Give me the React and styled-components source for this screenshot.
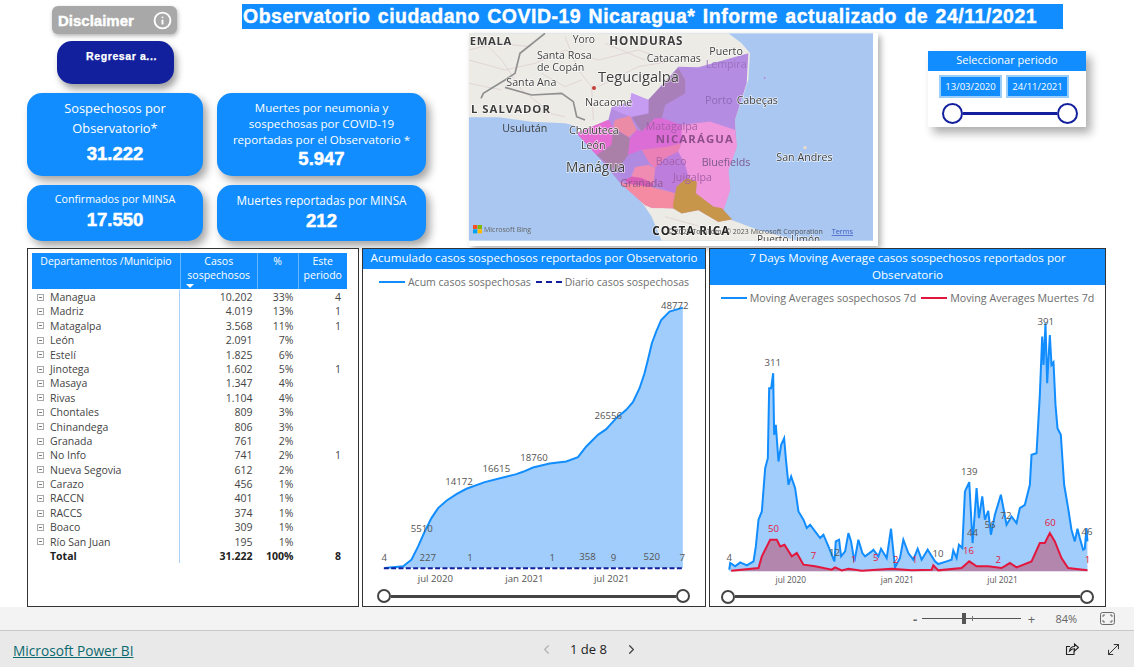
import styled, { createGlobalStyle } from "styled-components";
import { Info, ChevronLeft, ChevronRight, MoveDiagonal } from "lucide-react";

const BLUE = "#118dff";
const NAVY = "#13209e";
const UI_FONT = '"Open Sans", "Noto Sans", sans-serif';
const HEAVY_FONT = '"Liberation Sans", Arial, sans-serif';

const GlobalStyle = createGlobalStyle`
  html, body {
    margin: 0;
    padding: 0;
    background: #fff;
    font-family: ${UI_FONT};
  }
`;

const Page = styled.div`
  width: 1134px;
  height: 667px;
  display: flex;
  flex-direction: column;
  overflow: hidden;
  background: #fff;
`;

const Canvas = styled.main`
  height: 607px;
  flex: none;
`;

const TopArea = styled.section`
  height: 248px;
  padding-left: 27px;
  display: grid;
  grid-template-columns: 190px 252px 459px 206px;
  grid-template-rows: 33px 60px 155px;
`;

const Buttons = styled.div`
  grid-column: 1;
  grid-row: 1 / 3;
  display: flex;
  flex-direction: column;
  align-items: flex-start;
  padding-top: 6px;
  gap: 7px;
`;

const Disclaimer = styled.div`
  width: 125px;
  height: 28px;
  margin-left: 25px;
  box-sizing: border-box;
  padding: 0 5px 0 6px;
  display: flex;
  align-items: center;
  justify-content: space-between;
  border-radius: 6px;
  background: #a8a8a8;
  box-shadow: 1px 2px 4px rgba(0, 0, 0, 0.3);
  color: #fff;
  font: bold 15px ${HEAVY_FONT};
  -webkit-text-stroke: 0.4px #fff;
`;

const BackButton = styled.div`
  width: 117px;
  height: 43px;
  margin-left: 30px;
  box-sizing: border-box;
  padding-top: 9px;
  padding-left: 12px;
  border-radius: 15px;
  background: ${NAVY};
  box-shadow: 3px 5px 7px rgba(0, 0, 0, 0.38);
  color: #fff;
  text-align: center;
  font: bold 10.5px ${HEAVY_FONT};
  letter-spacing: 0.6px;
  -webkit-text-stroke: 0.25px #fff;
`;

const Title = styled.h1`
  grid-column: 2 / 5;
  grid-row: 1;
  width: 821px;
  height: 25px;
  margin: 4px 0 0 25px;
  padding-left: 1px;
  box-sizing: border-box;
  background: ${BLUE};
  color: #fff;
  font: bold 19.5px/25px ${HEAVY_FONT};
  letter-spacing: 0.5px;
  word-spacing: 1.5px;
  white-space: nowrap;
  -webkit-text-stroke: 0.4px #fff;
`;

const KpiGrid = styled.div`
  grid-column: 1 / 3;
  grid-row: 3;
  width: 399px;
  display: grid;
  grid-template-columns: 176px 209px;
  grid-template-rows: 83px 56px;
  column-gap: 14px;
  row-gap: 9px;
`;

const KpiCard = styled.div`
  box-sizing: border-box;
  padding-top: ${(p) => p.$top}px;
  display: flex;
  flex-direction: column;
  align-items: center;
  border-radius: 15px;
  background: ${BLUE};
  box-shadow: 4px 5px 8px rgba(0, 0, 0, 0.36);
  color: #fff;
  text-align: center;
`;

const KpiLabel = styled.div`
  font-size: ${(p) => p.$size}px;
  line-height: ${(p) => p.$line}px;
  white-space: nowrap;
`;

const KpiValue = styled.div`
  margin-top: ${(p) => p.$gap}px;
  font: bold 18.5px/20px ${HEAVY_FONT};
  -webkit-text-stroke: 0.5px #fff;
`;

const MapCard = styled.div`
  grid-column: 3;
  grid-row: 2 / 4;
  width: 409px;
  height: 213px;
  box-sizing: border-box;
  padding: 0 5px 5px 0;
  background: #fff;
  box-shadow: 3px 3px 6px rgba(0, 0, 0, 0.3);
`;

const MapSvg = styled.svg`
  display: block;
  width: 404px;
  height: 208px;
  filter: blur(0.45px);
`;

const MapLabel = styled.text`
  font-family: ${UI_FONT};
  font-size: ${(p) => p.$size || 32}px;
  font-weight: ${(p) => (p.$bold ? 700 : 400)};
  letter-spacing: ${(p) => p.$spacing || 0}px;
  fill: ${(p) => p.$color || "#3d3d3d"};
  stroke: ${(p) => (p.$halo === false ? "none" : "rgba(255,255,255,0.75)")};
  stroke-width: 4px;
  paint-order: stroke;
`;

const Slicer = styled.div`
  grid-column: 4;
  grid-row: 2 / 4;
  width: 158px;
  height: 76px;
  margin-top: 18px;
  background: #fff;
  box-shadow: 5px 6px 9px rgba(0, 0, 0, 0.32);
`;

const SlicerHeader = styled.div`
  height: 20px;
  background: ${BLUE};
  color: #fff;
  font-size: 11px;
  line-height: 17px;
  text-align: center;
`;

const DateRow = styled.div`
  display: flex;
  gap: 4px;
  padding: 4px 0 0 11px;
`;

const DateBox = styled.div`
  width: 63px;
  height: 23px;
  box-sizing: border-box;
  border: 2px solid #9ccdf9;
  background: ${BLUE};
  color: #fff;
  font-size: 9.5px;
  line-height: 19px;
  text-align: center;
`;

const Range = styled.div`
  display: flex;
  align-items: center;
  height: ${(p) => p.$height}px;
  margin: ${(p) => p.$margin};
`;

const RangeKnob = styled.span`
  width: ${(p) => p.$size}px;
  height: ${(p) => p.$size}px;
  box-sizing: border-box;
  flex: none;
  border: 2px solid ${(p) => p.$color};
  border-radius: 50%;
  background: #fff;
`;

const RangeTrack = styled.span`
  flex: 1;
  height: 3px;
  background: ${(p) => p.$color};
`;

const BottomArea = styled.section`
  height: 359px;
  padding-left: 27px;
  display: grid;
  grid-template-columns: 332px 344px 397px;
  column-gap: 3px;
`;

const Panel = styled.div`
  box-sizing: border-box;
  height: 359px;
  border: 1px solid #333;
  display: flex;
  flex-direction: column;
  background: #fff;
  overflow: hidden;
`;

const TableWrap = styled.div`
  width: 315px;
  margin: 4px 0 0 4px;
  color: #444;
  font-size: 10.5px;
`;

const TableHeader = styled.div`
  display: grid;
  grid-template-columns: 148px 76.5px 41px 49.5px;
  height: 36px;
  margin-bottom: 1px;
  background: ${BLUE};
  color: #fff;
  line-height: 14px;
  text-align: center;
`;

const HeaderCell = styled.div`
  position: relative;
  padding-top: 1px;
  border-left: ${(p) => (p.$first ? "none" : "1px solid #66b5ff")};
`;

const SortCaret = styled.span`
  position: absolute;
  left: 5px;
  bottom: 1px;
  border-left: 4px solid transparent;
  border-right: 4px solid transparent;
  border-top: 4px solid #fff;
`;

const TableRow = styled.div`
  display: grid;
  grid-template-columns: 148px 76.5px 41px 49.5px;
  height: 14.4px;
  line-height: 14.4px;
  font-weight: ${(p) => (p.$total ? 700 : 400)};
  color: ${(p) => (p.$total ? "#222" : "#444")};
`;

const NameCell = styled.div`
  display: flex;
  align-items: center;
  gap: 6px;
  padding-left: 5px;
  border-right: 1px solid #a8d2fb;
`;

const NumCell = styled.div`
  padding-right: ${(p) => p.$pad}px;
  text-align: right;
`;

const Expander = styled.span`
  position: relative;
  width: 7px;
  height: 7px;
  box-sizing: border-box;
  flex: none;
  border: 1px solid #a9a9a9;
  visibility: ${(p) => (p.$hidden ? "hidden" : "visible")};
  &::after {
    content: "";
    position: absolute;
    left: 1px;
    right: 1px;
    top: 2px;
    height: 1px;
    background: #777;
  }
`;

const PanelHeader = styled.div`
  height: ${(p) => p.$height}px;
  flex: none;
  background: ${BLUE};
  color: #fff;
  font-size: 11.65px;
  font-weight: 500;
  line-height: 17px;
  text-align: center;
`;

const Legend = styled.div`
  height: ${(p) => p.$height}px;
  flex: none;
  box-sizing: border-box;
  padding-top: ${(p) => p.$top}px;
  display: flex;
  align-items: center;
  justify-content: center;
  gap: 5px;
  color: #6e6e6e;
  font-size: ${(p) => p.$size}px;
  white-space: nowrap;
`;

const LegendSwatch = styled.span`
  width: 26px;
  height: 0;
  flex: none;
  margin-right: -2px;
  border-top: 2px ${(p) => (p.$dashed ? "dashed" : "solid")} ${(p) => p.$color};
`;

const ChartSvg = styled.svg`
  display: block;
  flex: none;
`;

const ChartLabel = styled.text`
  font-family: ${UI_FONT};
  font-size: ${(p) => p.$size || 29}px;
  text-anchor: middle;
  fill: ${(p) => p.$color || "#555"};
`;

const ZoomBar = styled.div`
  height: 24px;
  flex: none;
  box-sizing: border-box;
  border-bottom: 1px solid #c8c8c8;
  background: #f3f3f3;
  display: flex;
  align-items: center;
  padding: 0 19px 0 910px;
  color: #666;
  font-size: 11px;
`;

const ZoomSign = styled.span`
  width: 10px;
  margin-left: ${(p) => p.$gap || 0}px;
  text-align: center;
  font-size: 13px;
  font-weight: ${(p) => (p.$bold ? 700 : 400)};
`;

const ZoomLine = styled.div`
  position: relative;
  width: 100px;
  margin-left: 2px;
  height: 1px;
  background: #555;
  &::before {
    content: "";
    position: absolute;
    left: 40px;
    top: -5px;
    width: 4px;
    height: 11px;
    background: #555;
  }
  &::after {
    content: "";
    position: absolute;
    left: 50px;
    top: -2px;
    width: 1px;
    height: 5px;
    background: #777;
  }
`;

const ZoomValue = styled.span`
  margin: 0 23px 0 19px;
`;

const NavBar = styled.footer`
  flex: 1;
  display: flex;
  align-items: center;
  padding: 0 12px 0 13px;
  background: #e9e9e9;
`;

const PowerBiLink = styled.a`
  width: 120px;
  padding-top: 3px;
  color: #0b6a6e;
  font-size: 13.7px;
  text-decoration: underline;
  white-space: nowrap;
`;

const Pager = styled.div`
  display: flex;
  align-items: center;
  margin-left: 406px;
  color: #222;
  font-size: 13px;
  font-weight: 500;
`;

const PageText = styled.span`
  margin: 0 17px 0 16px;
`;

const NavIcons = styled.div`
  display: flex;
  align-items: center;
  gap: 26px;
  margin-left: auto;
  color: #222;
`;

const departments = [
  ["Managua", "10.202", "33%", "4"],
  ["Madriz", "4.019", "13%", "1"],
  ["Matagalpa", "3.568", "11%", "1"],
  ["León", "2.091", "7%", ""],
  ["Estelí", "1.825", "6%", ""],
  ["Jinotega", "1.602", "5%", "1"],
  ["Masaya", "1.347", "4%", ""],
  ["Rivas", "1.104", "4%", ""],
  ["Chontales", "809", "3%", ""],
  ["Chinandega", "806", "3%", ""],
  ["Granada", "761", "2%", ""],
  ["No Info", "741", "2%", "1"],
  ["Nueva Segovia", "612", "2%", ""],
  ["Carazo", "456", "1%", ""],
  ["RACCN", "401", "1%", ""],
  ["RACCS", "374", "1%", ""],
  ["Boaco", "309", "1%", ""],
  ["Río San Juan", "195", "1%", ""],
];

// coordinates below are read off the 3x crops of the report
const nicaragua =
  "640,110 700,112 850,70 845,160 810,270 815,350 790,420 795,480 775,540 800,568 760,575 700,540 650,550 625,535 560,533 540,525 465,458 395,375 335,310 430,270 440,232 495,215 500,190 550,210";

const regions = [
  ["#a97fba", "640,115 660,150 660,190 600,225 590,265 530,305 500,260 550,250 550,210"],
  ["#c69cf2", "500,190 550,210 550,250 500,260 470,250 440,235 495,215"],
  ["#ec8ba6", "450,270 495,258 515,300 490,322 445,290"],
  ["#e56cd3", "335,310 430,270 445,295 495,325 440,345 395,375"],
  ["#aa80a9", "445,295 495,325 490,375 465,410 455,425 395,375 440,345"],
  ["#dd6dd6", "495,325 515,300 530,305 570,265 590,265 650,285 650,340 610,350 530,360 490,375"],
  ["#ea80b6", "530,360 610,350 650,340 640,365 600,385 570,415 550,395"],
  ["#b089e0", "490,375 530,360 550,395 550,405 510,415 480,450 455,425 465,410"],
  ["#bd7ddc", "570,415 600,385 640,365 660,400 672,445 635,470 630,490 565,462"],
  ["#f08bb2", "510,412 550,405 570,415 565,462 530,445 500,440"],
  ["#d95cb5", "480,450 500,440 530,445 565,462 560,472 490,462"],
  ["#f58ba2", "465,458 490,462 560,472 630,490 625,535 560,533 540,525"],
  ["#f096dc", "650,285 735,275 810,300 815,350 790,420 795,480 775,540 745,530 692,490 695,455 672,445 660,400 640,365 650,340"],
  ["#c8964b", "625,520 635,470 665,445 695,455 692,490 745,530 770,535 800,568 760,575 700,540 650,550 625,535"],
];

const MapDrawing = () => (
  <MapSvg viewBox="12 10 1212 622" role="img" aria-label="Mapa de Nicaragua">
    <rect x="12" y="10" width="1212" height="622" fill="#a9c7f0" />
    <polygon
      fill="#ecebe6"
      points="12,10 790,10 830,40 855,70 850,150 810,270 815,350 790,420 795,480 775,540 800,570 880,600 1000,632 590,632 560,560 540,530 470,440 400,370 335,310 340,290 300,280 200,275 100,262 12,262"
    />
    <path
      fill="none"
      stroke="#dcc9cf"
      strokeWidth="2"
      d="M12,90 L120,120 L210,100 L300,60 L400,90 L520,60 L640,100 M40,20 L110,90 L170,180 L260,250 M300,20 L340,120 L380,170 L385,270 M400,170 L520,110 L700,80 M12,160 L110,180 M600,560 L780,610 M420,40 L540,90 M12,60 L90,40 L200,50 M230,130 L300,170 L350,150 M100,230 L200,240 L300,260"
    />
    <path
      fill="none"
      stroke="#8f8f8f"
      strokeWidth="5"
      d="M240,10 L165,70 L150,130 L120,150 L55,190 L48,205 M120,172 L200,195 L290,190 L325,215 L335,260 L360,270"
    />
    <polygon fill="#b48de2" points={nicaragua} />
    {regions.map(([color, points]) => (
      <polygon key={points} fill={color} stroke={color} strokeWidth="1" points={points} />
    ))}
    <circle cx="387" cy="174" r="6" fill="#c8403a" />
    <circle cx="899" cy="144" r="3" fill="#b48de2" />
    <MapLabel x="14" y="45" $bold $size={34} $spacing={2}>EMALA</MapLabel>
    <MapLabel x="323" y="39" $size={31}>Yoro</MapLabel>
    <MapLabel x="433" y="45" $bold $size={35} $spacing={2.5}>HONDURAS</MapLabel>
    <MapLabel x="216" y="86">Santa Rosa</MapLabel>
    <MapLabel x="216" y="124">de Copán</MapLabel>
    <MapLabel x="545" y="97">Catacamas</MapLabel>
    <MapLabel x="733" y="74">Puerto</MapLabel>
    <MapLabel x="722" y="113" $color="#9a6fc0" $halo={false}>Lempira</MapLabel>
    <MapLabel x="399" y="157" $size={44}>Tegucigalpa</MapLabel>
    <MapLabel x="124" y="169">Santa Ana</MapLabel>
    <MapLabel x="360" y="228">Nacaome</MapLabel>
    <MapLabel x="18" y="248" $bold $size={34} $spacing={3}>L SALVADOR</MapLabel>
    <MapLabel x="112" y="305" $halo={false}>Usulután</MapLabel>
    <MapLabel x="720" y="221" $color="#8f68b8" $halo={false}>Porto</MapLabel>
    <MapLabel x="815" y="221">Cabeças</MapLabel>
    <MapLabel x="312" y="311">Choluteca</MapLabel>
    <MapLabel x="542" y="300" $color="#a560a8" $halo={false}>Matagalpa</MapLabel>
    <MapLabel x="572" y="340" $bold $size={34} $spacing={3.5} $color="#8d4d8d" $halo={false}>NICARÁGUA</MapLabel>
    <MapLabel x="348" y="358">León</MapLabel>
    <MapLabel x="303" y="426" $size={41}>Manágua</MapLabel>
    <MapLabel x="572" y="406" $color="#a560a8" $halo={false}>Boaco</MapLabel>
    <MapLabel x="710" y="408" $color="#7b5a8e" $halo={false}>Bluefields</MapLabel>
    <MapLabel x="624" y="452" $color="#a560a8" $halo={false}>Juigalpa</MapLabel>
    <MapLabel x="466" y="470" $color="#8d5a8d" $halo={false}>Granada</MapLabel>
    <circle cx="1020" cy="353" r="5" fill="#f0d8c8" />
    <MapLabel x="934" y="393">San Andres</MapLabel>
    <rect x="24" y="585" width="13" height="12" fill="#f25022" />
    <rect x="38" y="585" width="13" height="12" fill="#7fba00" />
    <rect x="24" y="598" width="13" height="12" fill="#00a4ef" />
    <rect x="38" y="598" width="13" height="12" fill="#ffb900" />
    <MapLabel x="57" y="605" $size={21} $color="#666" $halo={false}>Microsoft Bing</MapLabel>
    <MapLabel x="562" y="614" $bold $size={35} $spacing={3} $color="#222">COSTA RICA</MapLabel>
    <MapLabel x="606" y="612" $size={21} $color="#555" $halo={false}>© 2022 TomTom, © 2023 Microsoft Corporation</MapLabel>
    <MapLabel x="1100" y="612" $size={22} $color="#3f5bc4" $halo={false} textDecoration="underline">Terms</MapLabel>
    <MapLabel x="876" y="640" $size={30}>Puerto Limón</MapLabel>
  </MapSvg>
);

const cumulative =
  "75,970 130,965 155,945 175,905 195,860 215,820 235,790 260,768 290,748 320,732 375,712 430,698 470,688 490,681 520,668 570,656 620,650 655,637 680,605 715,570 740,553 770,520 800,495 820,472 840,430 855,385 865,345 877,295 890,260 905,225 930,200 970,188";

const cumulativeLabels = [
  ["4", 73, 950], ["5510", 186, 863], ["227", 204, 948], ["14172", 298, 722],
  ["1", 331, 950], ["16615", 410, 683], ["18760", 523, 649], ["1", 578, 950],
  ["358", 684, 947], ["26556", 746, 523], ["9", 762, 950], ["520", 877, 945],
  ["48772", 946, 193], ["7", 968, 950],
];

const suspected =
  "72,975 75,955 90,965 105,953 125,962 145,950 152,905 160,825 170,800 180,670 188,640 192,430 198,430 204,385 207,570 212,540 220,650 228,600 237,580 242,640 250,720 258,695 270,730 280,800 295,825 305,850 315,840 330,860 345,880 355,870 370,905 388,950 392,890 402,885 408,935 420,920 430,865 438,890 448,950 460,885 472,925 480,935 500,920 505,915 520,935 528,912 545,940 558,852 570,968 585,940 595,885 610,925 625,945 638,912 650,945 668,915 690,950 700,958 725,950 740,945 745,917 755,940 762,900 772,910 780,740 793,712 803,895 815,730 822,820 832,755 840,825 850,798 858,870 870,810 888,750 905,840 920,815 935,835 945,790 960,780 975,720 980,630 995,625 1005,450 1012,275 1016,360 1022,235 1027,415 1035,270 1040,360 1046,352 1052,480 1058,550 1068,570 1078,720 1090,790 1100,855 1110,890 1118,852 1125,880 1135,915 1140,912 1145,850 1148,890";

const deaths =
  "78,978 160,970 170,935 185,905 195,885 215,885 225,905 238,900 260,935 275,925 295,960 330,965 380,975 390,968 410,977 430,972 470,978 560,972 620,977 680,975 685,962 700,977 770,970 793,950 815,965 850,965 890,970 915,955 935,968 980,950 1005,895 1020,895 1035,865 1050,890 1070,940 1090,970 1148,977";

const suspectedLabels = [
  ["4", 72, 949], ["311", 203, 364], ["12", 388, 935], ["10", 699, 937],
  ["139", 793, 691], ["44", 803, 874], ["56", 855, 851], ["72", 903, 822],
  ["391", 1023, 241], ["46", 1147, 871],
];

const deathLabels = [
  ["50", 205, 862], ["7", 325, 943], ["1", 445, 955], ["5", 512, 949],
  ["2", 572, 955], ["1", 629, 955], ["16", 791, 929], ["2", 880, 955],
  ["60", 1036, 844], ["1", 1148, 955],
];

const App = () => {
  return (
    <Page>
      <GlobalStyle />
      <Canvas>
        <TopArea>
          <Buttons>
            <Disclaimer>
              Disclaimer
              <Info size={19} strokeWidth={2.4} />
            </Disclaimer>
            <BackButton>Regresar a...</BackButton>
          </Buttons>
          <Title>Observatorio ciudadano COVID-19 Nicaragua* Informe actualizado de 24/11/2021</Title>
          <KpiGrid>
            <KpiCard $top={5}>
              <KpiLabel $size={12.8} $line={20}>Sospechosos por<br />Observatorio*</KpiLabel>
              <KpiValue $gap={6}>31.222</KpiValue>
            </KpiCard>
            <KpiCard $top={7}>
              <KpiLabel $size={11.6} $line={16}>Muertes por neumonia y<br />sospechosas por COVID-19<br />reportadas por el Observatorio *</KpiLabel>
              <KpiValue $gap={1}>5.947</KpiValue>
            </KpiCard>
            <KpiCard $top={6}>
              <KpiLabel $size={10.7} $line={16}>Confirmados por MINSA</KpiLabel>
              <KpiValue $gap={3}>17.550</KpiValue>
            </KpiCard>
            <KpiCard $top={7}>
              <KpiLabel $size={11.7} $line={16}>Muertes reportadas por MINSA</KpiLabel>
              <KpiValue $gap={3}>212</KpiValue>
            </KpiCard>
          </KpiGrid>
          <MapCard>
            <MapDrawing />
          </MapCard>
          <Slicer>
            <SlicerHeader>Seleccionar periodo</SlicerHeader>
            <DateRow>
              <DateBox>13/03/2020</DateBox>
              <DateBox>24/11/2021</DateBox>
            </DateRow>
            <Range $height={22} $margin="4px 8px 0 14px">
              <RangeKnob $size={21} $color={NAVY} />
              <RangeTrack $color={NAVY} />
              <RangeKnob $size={21} $color={NAVY} />
            </Range>
          </Slicer>
        </TopArea>
        <BottomArea>
          <Panel>
            <TableWrap>
              <TableHeader>
                <HeaderCell $first>Departamentos /Municipio</HeaderCell>
                <HeaderCell>
                  Casos<br />sospechosos
                  <SortCaret />
                </HeaderCell>
                <HeaderCell>%</HeaderCell>
                <HeaderCell>Este<br />periodo</HeaderCell>
              </TableHeader>
              {departments.map(([name, cases, share, period]) => (
                <TableRow key={name}>
                  <NameCell>
                    <Expander />
                    {name}
                  </NameCell>
                  <NumCell $pad={4}>{cases}</NumCell>
                  <NumCell $pad={4}>{share}</NumCell>
                  <NumCell $pad={6}>{period}</NumCell>
                </TableRow>
              ))}
              <TableRow $total>
                <NameCell>
                  <Expander $hidden />
                  Total
                </NameCell>
                <NumCell $pad={4}>31.222</NumCell>
                <NumCell $pad={4}>100%</NumCell>
                <NumCell $pad={6}>8</NumCell>
              </TableRow>
            </TableWrap>
          </Panel>

          <Panel>
            <PanelHeader $height={20}>Acumulado casos sospechosos reportados por Observatorio</PanelHeader>
            <Legend $height={21} $top={4} $size={10.5}>
              <LegendSwatch $color={BLUE} />
              Acum casos sospechosas
              <LegendSwatch $color={NAVY} $dashed />
              Diario casos sospechosas
            </Legend>
            <ChartSvg viewBox="10 135 1020 895" width="340" height="298">
              <polygon fill="#a0cdfc" points={`${cumulative} 970,970`} />
              <polyline fill="none" stroke={BLUE} strokeWidth="6" points={cumulative} />
              <line x1="72" y1="971" x2="972" y2="971" stroke={NAVY} strokeWidth="6" strokeDasharray="15 7" />
              {cumulativeLabels.map(([text, x, y]) => (
                <ChartLabel key={`${text}-${x}`} x={x} y={y}>{text}</ChartLabel>
              ))}
              <ChartLabel x="227" y="1013">jul 2020</ChartLabel>
              <ChartLabel x="494" y="1013">jan 2021</ChartLabel>
              <ChartLabel x="756" y="1013">jul 2021</ChartLabel>
            </ChartSvg>
            <Range $height={16} $margin="0 15px 0 14px">
              <RangeKnob $size={14} $color="#444" />
              <RangeTrack $color="#444" />
              <RangeKnob $size={14} $color="#444" />
            </Range>
          </Panel>

          <Panel>
            <PanelHeader $height={36}>
              7 Days Moving Average casos sospechosos reportados por<br />Observatorio
            </PanelHeader>
            <Legend $height={20} $top={6} $size={10.7}>
              <LegendSwatch $color={BLUE} />
              Moving Averages sospechosos 7d
              <LegendSwatch $color="#e3173e" />
              Moving Averages Muertes 7d
            </Legend>
            <ChartSvg viewBox="15 180 1185 850" width="395" height="283">
              <polygon fill="#a0cdfc" points={`72,980 ${suspected} 1148,980`} />
              <polyline fill="none" stroke={BLUE} strokeWidth="6" points={suspected} />
              <polygon fill="#c9304d" fillOpacity="0.45" points={`78,980 ${deaths} 1148,980`} />
              <polyline fill="none" stroke="#e3173e" strokeWidth="6" points={deaths} />
              {suspectedLabels.map(([text, x, y]) => (
                <ChartLabel key={`${text}-${x}`} x={x} y={y}>{text}</ChartLabel>
              ))}
              {deathLabels.map(([text, x, y]) => (
                <ChartLabel key={`${text}-${x}`} x={x} y={y} $color="#e3173e">{text}</ChartLabel>
              ))}
              <ChartLabel x="257" y="1016" $size={25}>jul 2020</ChartLabel>
              <ChartLabel x="577" y="1016" $size={25}>jan 2021</ChartLabel>
              <ChartLabel x="893" y="1016" $size={25}>jul 2021</ChartLabel>
            </ChartSvg>
            <Range $height={17} $margin="0 11px">
              <RangeKnob $size={14} $color="#444" />
              <RangeTrack $color="#444" />
              <RangeKnob $size={14} $color="#444" />
            </Range>
          </Panel>
        </BottomArea>
      </Canvas>

      <ZoomBar>
        <ZoomSign $bold>-</ZoomSign>
        <ZoomLine />
        <ZoomSign $gap={5}>+</ZoomSign>
        <ZoomValue>84%</ZoomValue>
        <svg width="15" height="13" viewBox="0 0 15 13" fill="none" stroke="#666">
          <rect x="0.5" y="0.5" width="14" height="12" rx="2" />
          <path d="M3 5V3h2M10 3h2v2M12 8v2h-2M5 10H3V8" />
        </svg>
      </ZoomBar>
      <NavBar>
        <PowerBiLink href="#">Microsoft Power BI</PowerBiLink>
        <Pager>
          <ChevronLeft size={15} color="#b5b5b5" />
          <PageText>1 de 8</PageText>
          <ChevronRight size={15} color="#444" />
        </Pager>
        <NavIcons>
          <svg width="14" height="14" viewBox="0 0 14 14" fill="none" stroke="#222" strokeWidth="1.1">
            <path d="M9 8.5V12.5H1.5V4.5H5" />
            <path d="M4.5 9C5 6 7 4.5 9.5 4.5V2l4 3.5-4 3.5V6.8C7.5 6.8 6 7.5 4.5 9z" />
          </svg>
          <MoveDiagonal size={17} strokeWidth={1.3} />
        </NavIcons>
      </NavBar>
    </Page>
  );
};

export default App;
